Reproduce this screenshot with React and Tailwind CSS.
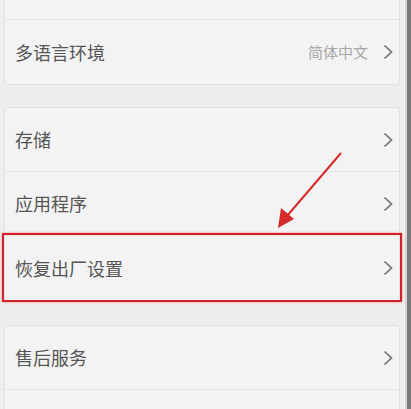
import React from "react";

const font = { fontFamily: '"Noto Sans CJK SC", "Noto Sans", sans-serif' };

function Chevron() {
    return (
        <svg width="10" height="16" viewBox="0 0 10 16" className="shrink-0">
            <polyline points="1.5,1.5 8.5,8 1.5,14.5" fill="none" stroke="#707070" strokeWidth="1.7" />
        </svg>
    );
}

function Row({label, value, last, highlight}) {
    return (
        <div className={`relative flex items-center h-[64px] pl-[10px] pr-[6px] ${last ? "" : "border-b border-[#e3e3e3]"}`}>
            <span className="flex-1 text-[18px] text-[#555555]">{label}</span>
            {value && <span className="mr-[15px] text-[15px] text-[#a8a8a8]">{value}</span>}
            <Chevron />
            {highlight && (
                <div className="absolute -left-[3px] -right-[3px] -top-[3px] -bottom-[2px] border-2 border-[#d3202a] shadow-[0_0_2px_#f08080]" />
            )}
        </div>
    );
}

function Card({children, className}) {
    return (
        <div className={`bg-[#f3f3f3] border border-[#e2e2e2] rounded-[3px] ${className || ""}`}>
            {children}
        </div>
    );
}

export default function App() {
    return (
        <div className="relative flex w-[411px] h-[409px] overflow-hidden bg-[#eeeeee]" style={font}>
            <div className="flex-1 flex flex-col pl-[4px] pr-[5px] -mt-[45px]">
                <Card>
                    <Row label="位置信息" />
                    <Row label="多语言环境" value="简体中文" last />
                </Card>

                <Card className="mt-[22px]">
                    <Row label="存储" />
                    <Row label="应用程序" />
                    <Row label="恢复出厂设置" last highlight />
                </Card>

                <Card className="mt-[24px]">
                    <Row label="售后服务" />
                    <Row label="关于手机" last />
                </Card>
            </div>
            <div className="w-[2px] bg-[#d6d6d6]" />
            <div className="w-[4px] bg-[#7a7a7a]" />

            <svg className="absolute left-0 top-0" width="411" height="409" viewBox="0 0 411 409">
                <line x1="341" y1="153" x2="287" y2="216" stroke="#d42a2a" strokeWidth="2" />
                <polygon points="278,228 281,208 294,219" fill="#d42a2a" />
            </svg>
        </div>
    );
}
